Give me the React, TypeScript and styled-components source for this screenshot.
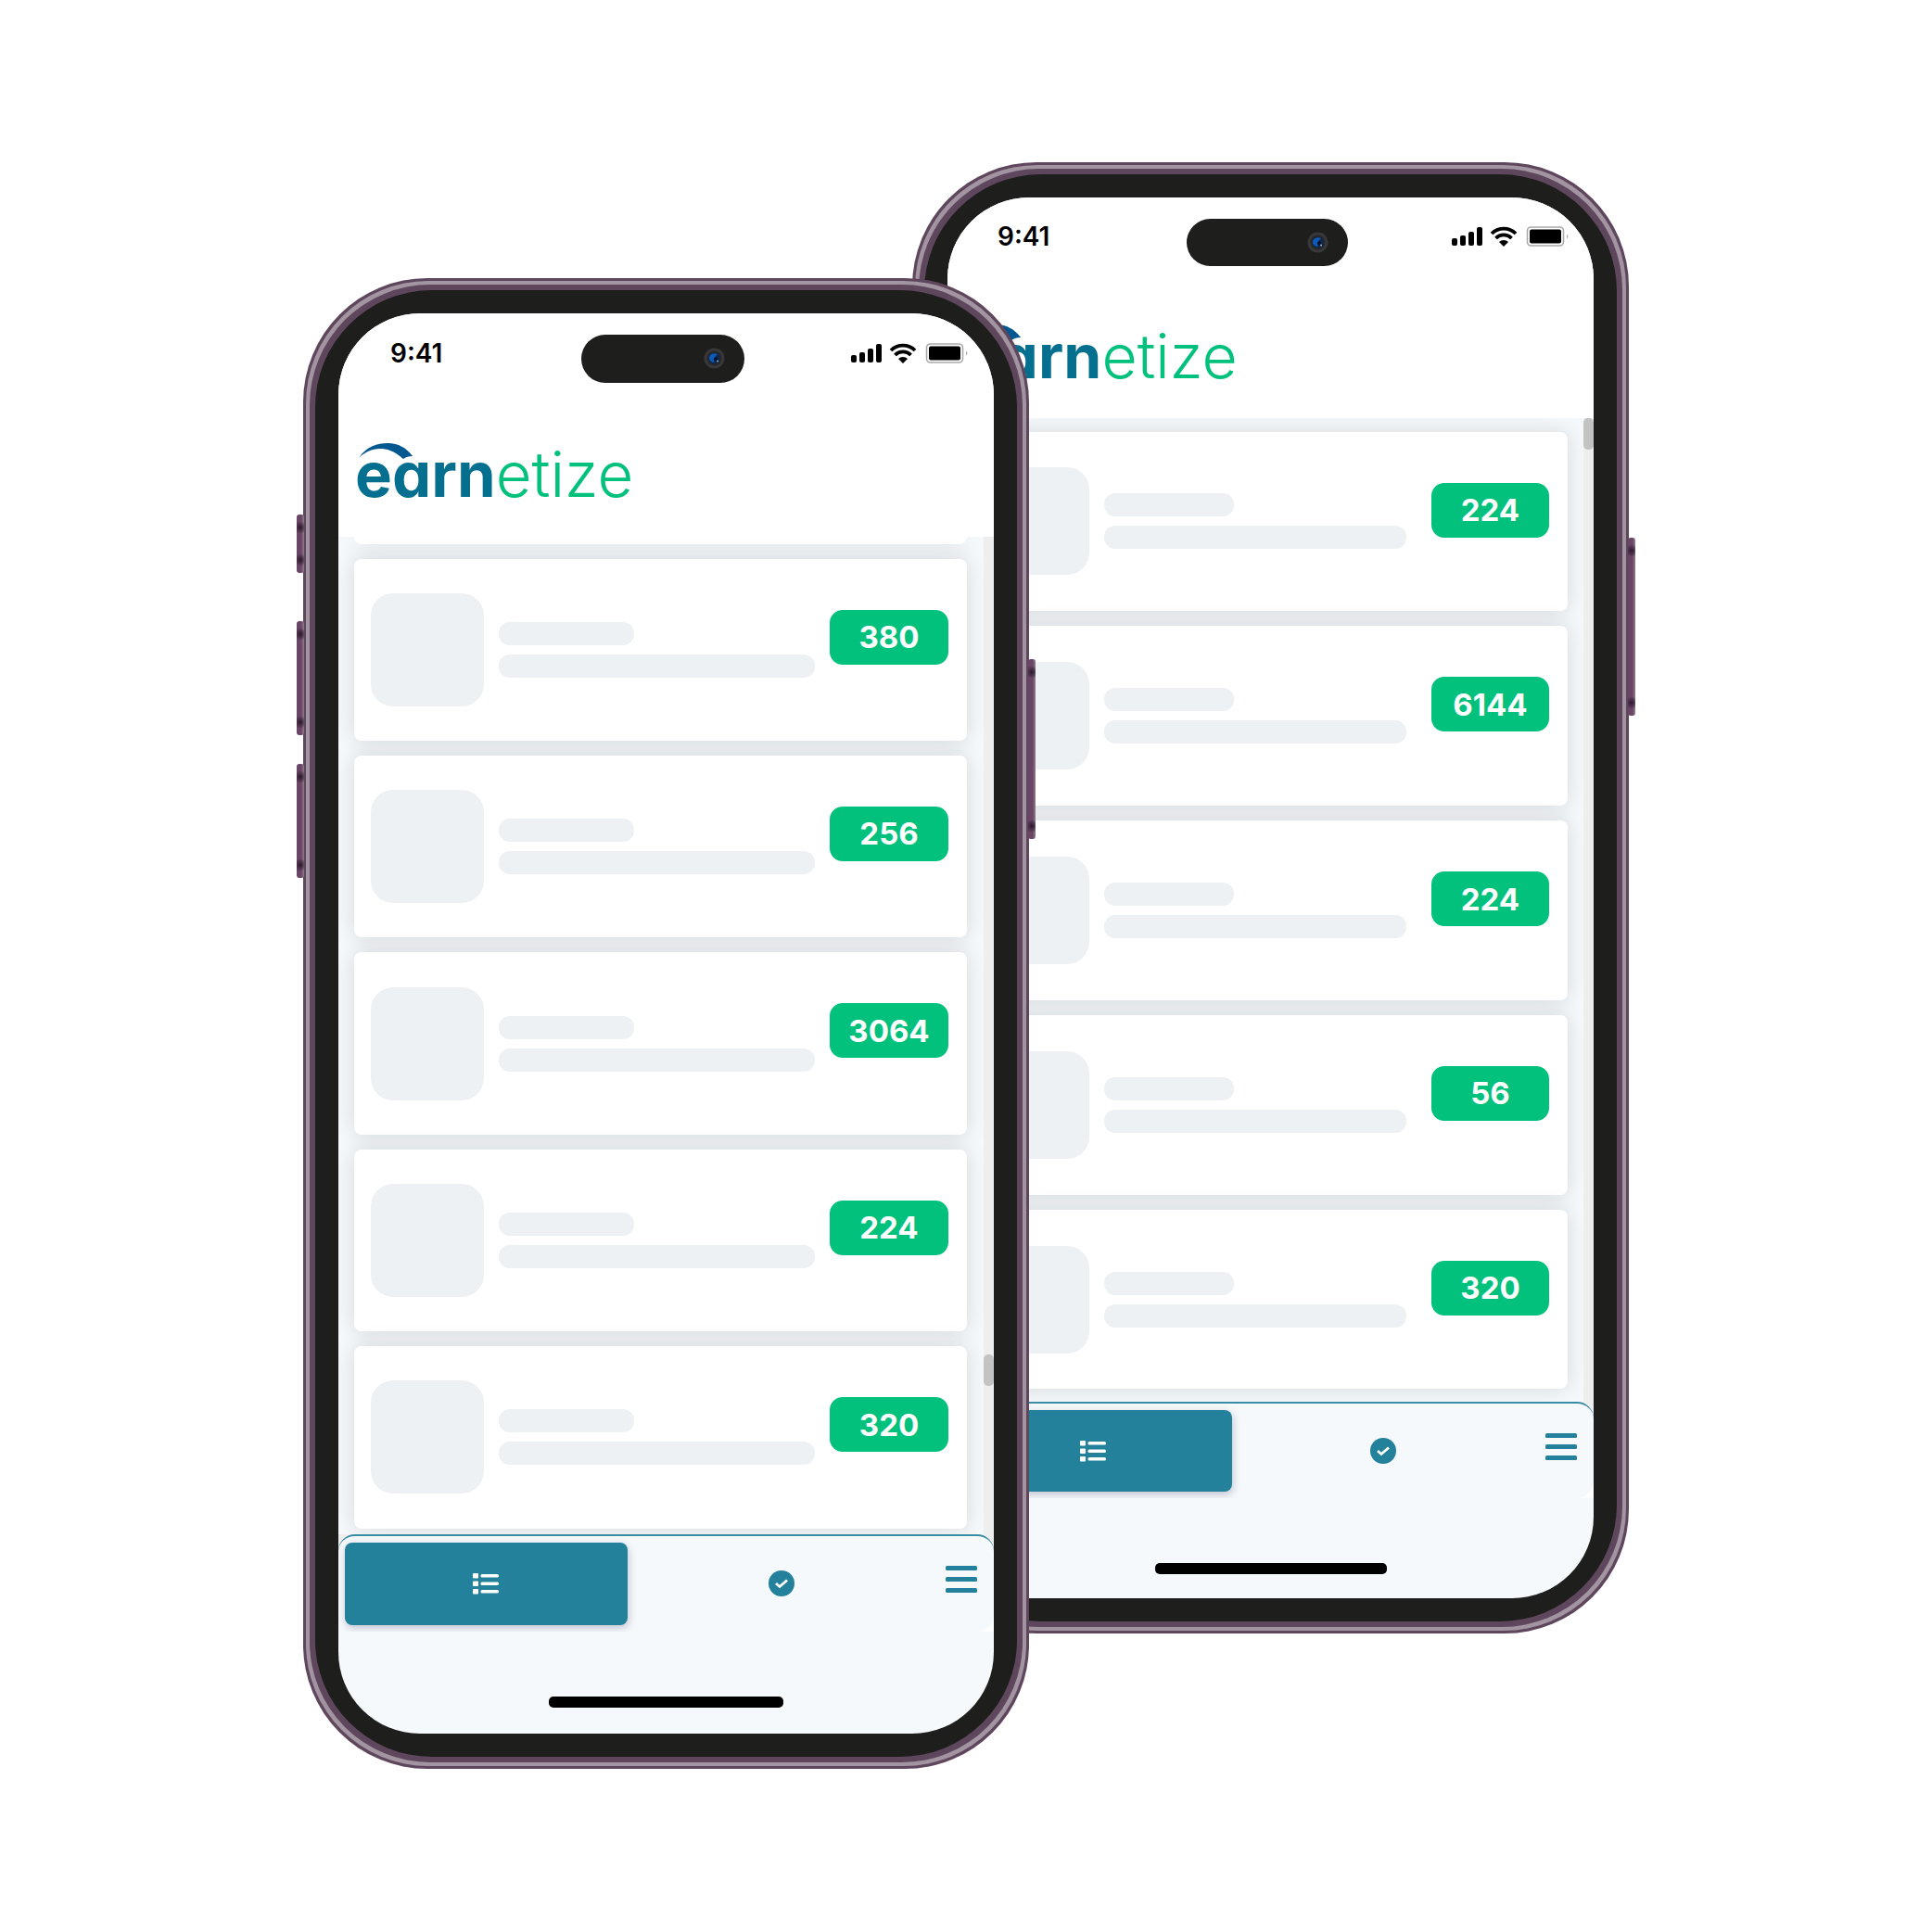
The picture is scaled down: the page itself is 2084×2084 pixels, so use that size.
import React from "react";
import styled, { createGlobalStyle, css, ThemeProvider } from "styled-components";

const front = {
  width: 783,
  screenHeight: 1532,
  headerHeight: 241,
  islandWidth: 176,
  islandHeight: 52,
  islandTop: 23,
  islandLeft: 262,
  statusTop: 30,
  statusLeft: 56,
  statusRight: 26,
  logoMargin: "78px 0 0 18px",
  logoSize: 67,
  listPad: "0 29px 6px 17px",
  listHeight: 1076,
  avatarW: 122,
  avatarH: 122,
  shortW: 146,
  lineGap: 16,
  badgeW: 128,
  badgeH: 59,
  navHeight: 105,
  homeTop: 70,
  homeWidth: 253,
};

const back = {
  ...front,
  width: 773,
  screenHeight: 1511,
  headerHeight: 238,
  islandWidth: 174,
  islandHeight: 51,
  islandLeft: 258,
  statusTop: 29,
  statusLeft: 54,
  statusRight: 25,
  logoMargin: "76px 0 0 17px",
  logoSize: 66,
  listPad: "15px 28px 13px 17px",
  listHeight: 1061,
  avatarW: 118,
  avatarH: 116,
  shortW: 140,
  badgeW: 127,
  badgeH: 59,
  navHeight: 104,
  lineGap: 27,
  homeWidth: 250,
};

const GlobalStyle = createGlobalStyle`
  * { box-sizing: border-box; }
  body { margin: 0; background: #fff; font-family: Inter, "Liberation Sans", sans-serif; }
  button { font: inherit; border: 0; padding: 0; cursor: pointer; }
`;

const Stage = styled.main`
  min-height: 100vh;
  display: flex;
  justify-content: center;
  align-items: center;
  padding-bottom: 2px;
`;

const Pair = styled.div`
  display: flex;
  align-items: flex-start;
`;

const Body = styled.article<{ $front?: boolean }>`
  position: relative;
  flex: none;
  width: ${(p) => p.theme.width}px;
  padding: 3px;
  border-radius: 134px;
  background: #5e465c;
  ${(p) =>
    p.$front &&
    css`
      z-index: 1;
      margin: 125px -126px 0 0;
    `}
`;

const Shine = styled.div`
  padding: 4px;
  border-radius: 132px;
  background: #a394a2;
`;

const Rim = styled.div`
  padding: 6px;
  border-radius: 130px;
  background: #5e465c;
`;

const Bezel = styled.div`
  padding: 25px;
  border-radius: 126px;
  background: #1e1e1c;
`;

const Screen = styled.div`
  position: relative;
  height: ${(p) => p.theme.screenHeight}px;
  display: flex;
  flex-direction: column;
  overflow: hidden;
  border-radius: 88px;
  background: #f5f9fc;
`;

const SideKey = styled.span<{ $side: "left" | "right"; $top: number; $length: number }>`
  position: absolute;
  ${(p) => p.$side}: -7px;
  top: ${(p) => p.$top}px;
  width: 8px;
  height: ${(p) => p.$length}px;
  border-radius: 3px;
  background:
    radial-gradient(circle at 50% 14px, #2c1a2e 0, transparent 7px),
    radial-gradient(circle at 50% calc(100% - 14px), #2c1a2e 0, transparent 7px),
    linear-gradient(90deg, #6b4565 0, #6b4565 60%, #8d7f8a 100%);
`;

const Header = styled.header`
  flex: none;
  height: ${(p) => p.theme.headerHeight}px;
  background: #fff;
`;

const StatusBar = styled.div`
  display: flex;
  justify-content: space-between;
  padding: ${(p) => p.theme.statusTop}px ${(p) => p.theme.statusRight}px 0 ${(p) => p.theme.statusLeft}px;
`;

const Time = styled.time`
  font-size: 28px;
  line-height: 26px;
  font-weight: 600;
  color: #000;
`;

const Island = styled.div`
  position: absolute;
  top: ${(p) => p.theme.islandTop}px;
  left: ${(p) => p.theme.islandLeft}px;
  width: ${(p) => p.theme.islandWidth}px;
  height: ${(p) => p.theme.islandHeight}px;
  display: flex;
  align-items: center;
  justify-content: flex-end;
  padding-right: 21px;
  border-radius: 26px;
  background: #1e1e1c;
`;

const Logo = styled.h1`
  position: relative;
  margin: ${(p) => p.theme.logoMargin};
  font-size: ${(p) => p.theme.logoSize}px;
  line-height: 80px;
  font-weight: 300;
  color: #02c17c;
  white-space: nowrap;
  font-feature-settings: "cv11";

  b {
    font-weight: 700;
    color: #046f8e;
  }

  svg {
    position: absolute;
    left: 4px;
    top: 6px;
  }
`;

const ListArea = styled.section`
  position: relative;
  flex: none;
  height: ${(p) => p.theme.listHeight}px;
  display: flex;
  flex-direction: column;
  gap: 16px;
  overflow: hidden;
  padding: ${(p) => p.theme.listPad};
`;

const cardSurface = css`
  border-radius: 8px;
  background: #fff;
  box-shadow: 0 0 24px rgba(36, 24, 24, 0.14);
`;

const CardEnd = styled.div`
  flex: none;
  height: 8px;
  ${cardSurface}
  border-radius: 0 0 8px 8px;
`;

const Card = styled.div`
  flex: 1;
  display: flex;
  align-items: center;
  padding: 0 20px 0 18px;
  ${cardSurface}
`;

const Avatar = styled.div`
  flex: none;
  width: ${(p) => p.theme.avatarW}px;
  height: ${(p) => p.theme.avatarH}px;
  margin-right: 16px;
  border-radius: 24px;
  background: #edf1f4;
`;

const Lines = styled.div`
  flex: 1;
  display: flex;
  flex-direction: column;
  gap: 10px;
  margin-right: ${(p) => p.theme.lineGap}px;
`;

const Line = styled.div<{ $short?: boolean }>`
  height: 25px;
  width: ${(p) => (p.$short ? p.theme.shortW + "px" : "100%")};
  border-radius: 12px;
  background: #edf1f4;
`;

const Points = styled.button`
  align-self: flex-start;
  flex: none;
  width: ${(p) => p.theme.badgeW}px;
  height: ${(p) => p.theme.badgeH}px;
  margin-top: 55px;
  border-radius: 14px;
  background: #02c17c;
  color: #fff;
  && {
    font-size: 33px;
    font-weight: 700;
  }
`;

const Track = styled.div`
  position: absolute;
  top: 0;
  right: 0;
  bottom: 0;
  width: 11px;
  background: #eeeeee;
`;

const Thumb = styled.div`
  height: 34px;
  border-radius: 5px;
  background: #c3c3c3;
`;

const NavBack = styled.div`
  flex: none;
  background: linear-gradient(#eeeeee 30%, #fff 30%);
`;

const Nav = styled.nav`
  height: ${(p) => p.theme.navHeight}px;
  display: grid;
  grid-template-columns: 1fr 1fr 70px;
  overflow: hidden;
  border-top: 2px solid #3a8ca4;
  border-radius: 18px 18px 18px 0;
  background: #f5f9fc;
`;

const Tab = styled.button<{ $active?: boolean }>`
  display: flex;
  align-items: center;
  justify-content: center;
  margin: 7px;
  border-radius: 8px;
  background: ${(p) => (p.$active ? "#24819b" : "transparent")};
  color: ${(p) => (p.$active ? "#fff" : "#24819b")};
  box-shadow: ${(p) => (p.$active ? "1px 3px 8px rgba(40, 40, 80, 0.25)" : "none")};
`;

const MenuButton = styled(Tab)`
  margin: 0 0 8px;
`;

const HomeBar = styled.div`
  width: ${(p) => p.theme.homeWidth}px;
  height: 12px;
  margin: ${(p) => p.theme.homeTop}px auto 0;
  border-radius: 5px;
  background: #000;
`;

const StatusIcons = () => (
  <svg width="128" height="26" viewBox="0 0 128 26" aria-hidden="true">
    <g fill="#000">
      <rect x="0" y="15" width="6" height="8" rx="2" />
      <rect x="9" y="12" width="6" height="11" rx="2" />
      <rect x="18" y="8" width="6" height="15" rx="2" />
      <rect x="27" y="3" width="6" height="20" rx="2" />
      <path d="M56 24l-5-5a7 7 0 0 1 10 0z" />
    </g>
    <g fill="none" stroke="#000" strokeWidth="3.8">
      <path d="M43 10a18.5 18.5 0 0 1 26 0" />
      <path d="M47.5 15a12 12 0 0 1 17 0" />
    </g>
    <rect x="81.5" y="3" width="39" height="20" rx="4" fill="none" stroke="#aaa" strokeWidth="1.6" />
    <rect x="84" y="5.5" width="34" height="15" rx="2" fill="#000" />
    <path d="M124 10.500q3 2.500 0 5z" fill="#aaa" />
  </svg>
);

const Camera = () => (
  <svg width="23" height="23" viewBox="0 0 23 23" aria-hidden="true">
    <circle cx="11.500" cy="11.500" r="11" fill="#38383a" />
    <circle cx="11.500" cy="11.500" r="8" fill="#26282c" />
    <circle cx="11.500" cy="11.500" r="5.800" fill="#0b2950" />
    <path d="M6 12a5.500 5.500 0 0 1 9-4.500q-4 1.500-2.500 6L11 16q-4-.5-5-4z" fill="#0d5ab8" />
    <circle cx="13" cy="12.500" r="2.200" fill="#071226" />
    <circle cx="15" cy="14.500" r="1" fill="#9ab6d4" />
  </svg>
);

const Swoosh = () => (
  <svg width="58" height="17" viewBox="0 0 58 17" aria-hidden="true">
    <path d="M0 16C9 3 20 0 31 0c12 0 20 5 27 14q-6 0-10 3C38 8 30 6 23 6 14 6 6 10 0 16z" fill="#01578f" />
  </svg>
);

const ListIcon = () => (
  <svg width="28" height="24" viewBox="0 0 28 24" fill="#fff" aria-hidden="true">
    {[1, 9.5, 18].map((y) => (
      <g key={y}>
        <rect x="0" y={y} width="6" height="5.500" rx="1" />
        <rect x="8.500" y={y + 1} width="19.500" height="3.500" rx="1.500" />
      </g>
    ))}
  </svg>
);

const CheckIcon = () => (
  <svg width="28" height="28" viewBox="0 0 28 28" aria-hidden="true">
    <circle cx="14" cy="14" r="14" fill="#24819b" />
    <path d="M8 14l4 3.500 8-7" fill="none" stroke="#fff" strokeWidth="2.800" />
  </svg>
);

const MenuIcon = () => (
  <svg width="34" height="32" viewBox="0 0 34 32" fill="#24819b" aria-hidden="true">
    <rect y="1" width="34" height="5" rx="1.500" />
    <rect y="13" width="34" height="5" rx="1.500" />
    <rect y="25" width="34" height="5" rx="1.500" />
  </svg>
);

type PhoneProps = {
  sizes: typeof front;
  points: number[];
  scrolled?: boolean;
  keys: { side: "left" | "right"; top: number; length: number }[];
};

const Phone = ({ sizes, points, scrolled, keys }: PhoneProps) => (
  <ThemeProvider theme={sizes}>
    <Body $front={scrolled}>
      {keys.map((k) => (
        <SideKey key={k.side + k.top} $side={k.side} $top={k.top} $length={k.length} />
      ))}
      <Shine>
        <Rim>
          <Bezel>
            <Screen>
              <Header>
                <StatusBar>
                  <Time>9:41</Time>
                  <StatusIcons />
                </StatusBar>
                <Island>
                  <Camera />
                </Island>
                <Logo>
                  <b>earn</b>etize
                  <Swoosh />
                </Logo>
              </Header>
              <ListArea>
                {scrolled && <CardEnd />}
                {points.map((value, i) => (
                  <Card key={i}>
                    <Avatar />
                    <Lines>
                      <Line $short />
                      <Line />
                    </Lines>
                    <Points type="button">{value}</Points>
                  </Card>
                ))}
                <Track>
                  <Thumb style={{ marginTop: scrolled ? 882 : 0 }} />
                </Track>
              </ListArea>
              <NavBack>
                <Nav>
                  <Tab type="button" $active aria-label="Offers">
                    <ListIcon />
                  </Tab>
                  <Tab type="button" aria-label="Completed">
                    <CheckIcon />
                  </Tab>
                  <MenuButton type="button" aria-label="Menu">
                    <MenuIcon />
                  </MenuButton>
                </Nav>
              </NavBack>
              <HomeBar />
            </Screen>
          </Bezel>
        </Rim>
      </Shine>
    </Body>
  </ThemeProvider>
);

const App = () => (
  <>
    <GlobalStyle />
    <Stage>
      <Pair>
        <Phone
          sizes={front}
          scrolled
          points={[380, 256, 3064, 224, 320]}
          keys={[
            { side: "left", top: 255, length: 63 },
            { side: "left", top: 370, length: 123 },
            { side: "left", top: 524, length: 123 },
            { side: "right", top: 411, length: 194 },
          ]}
        />
        <Phone
          sizes={back}
          points={[224, 6144, 224, 56, 320]}
          keys={[{ side: "right", top: 405, length: 192 }]}
        />
      </Pair>
    </Stage>
  </>
);

export default App;
